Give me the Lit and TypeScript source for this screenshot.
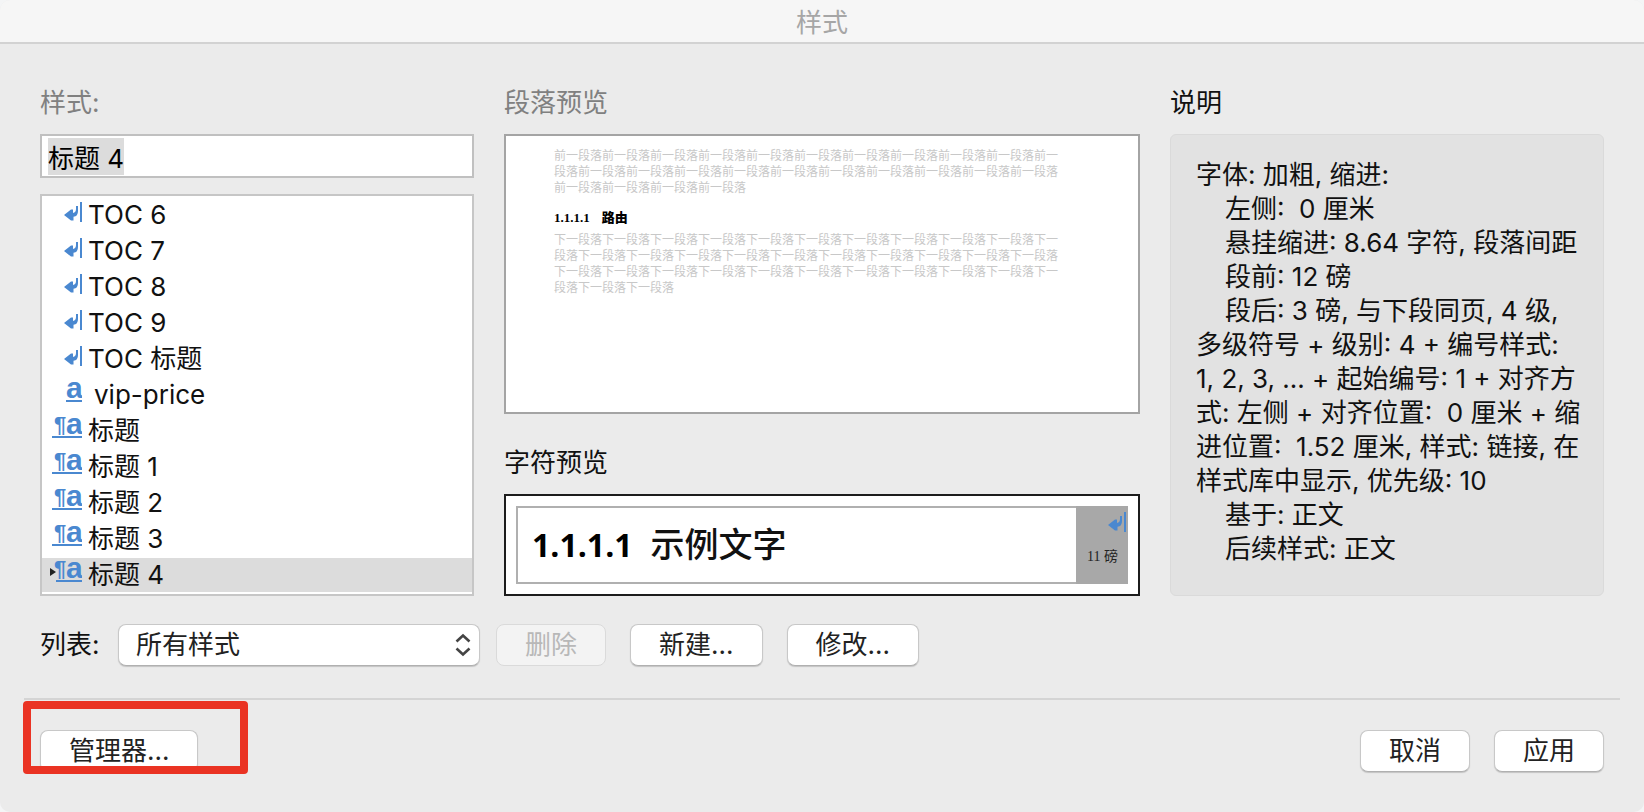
import { LitElement, html, svg, css, nothing } from "lit";
import { customElement, property, state, query } from "lit/decorators.js";
import { classMap } from "lit/directives/class-map.js";

type Kind = "paragraph" | "character" | "linked";

interface StyleEntry {
  kind: Kind;
  name: string;
}

const STYLES: StyleEntry[] = [
  { kind: "paragraph", name: "TOC 6" },
  { kind: "paragraph", name: "TOC 7" },
  { kind: "paragraph", name: "TOC 8" },
  { kind: "paragraph", name: "TOC 9" },
  { kind: "paragraph", name: "TOC 标题" },
  { kind: "character", name: "vip-price" },
  { kind: "linked", name: "标题" },
  { kind: "linked", name: "标题 1" },
  { kind: "linked", name: "标题 2" },
  { kind: "linked", name: "标题 3" },
  { kind: "linked", name: "标题 4" },
];

const DESCRIPTION: { text: string; indent?: boolean }[] = [
  { text: "字体: 加粗, 缩进:" },
  { text: "左侧:  0 厘米", indent: true },
  { text: "悬挂缩进: 8.64 字符, 段落间距", indent: true },
  { text: "段前: 12 磅", indent: true },
  { text: "段后: 3 磅, 与下段同页, 4 级,", indent: true },
  { text: "多级符号 + 级别: 4 + 编号样式:" },
  { text: "1, 2, 3, ... + 起始编号: 1 + 对齐方" },
  { text: "式: 左侧 + 对齐位置:  0 厘米 + 缩" },
  { text: "进位置:  1.52 厘米, 样式: 链接, 在" },
  { text: "样式库中显示, 优先级: 10" },
  { text: "基于: 正文", indent: true },
  { text: "后续样式: 正文", indent: true },
];

@customElement("style-icon")
export class StyleIcon extends LitElement {
  @property() kind: Kind = "paragraph";
  @property({ type: Boolean }) current = false;

  static styles = css`
    :host {
      display: block;
      line-height: 0;
    }
    .icon {
      display: block;
      margin: -14px 0 -4px;
      color: #4a88d0;
      fill: currentColor;
    }
    .letter {
      font: bold 30px "Liberation Sans", sans-serif;
    }
    .pilcrow {
      font: bold 22px "Liberation Sans", sans-serif;
    }
    .marker {
      fill: #222;
    }
  `;

  render() {
    const returnMark = svg`
      <rect x="28" y="0" width="2" height="20" />
      <path d="M12 13 L19 7.500 H21 V11 Q24 10.500 24 7 V4 H26 V9 Q26 14.400 21.500 14.800 V18.600 H19 Z" />
    `;
    const letter = svg`<text class="letter" x="14" y="16">a</text>`;
    const left = this.kind === "character" ? 14 : this.current ? 4 : 0;
    return html`
      <svg class="icon" width="32" height="38" viewBox="-2 -14 32 38" aria-hidden="true">
        ${this.kind === "paragraph"
          ? returnMark
          : svg`
            ${this.kind === "linked" ? svg`<text class="pilcrow" x="2" y="14">¶</text>` : nothing}
            ${letter}
            <rect x=${left} y="18" width=${30 - left} height="2" />
            ${this.current ? svg`<path class="marker" d="M-2 6 L4 10 L-2 14 Z" />` : nothing}
          `}
      </svg>
    `;
  }
}

@customElement("app-root")
export class AppRoot extends LitElement {
  @state() private selected = "标题 4";
  @query(".name") private nameInput!: HTMLInputElement;

  static styles = css`
    :host {
      display: block;
      background: #f4f5f6;
      color: #111;
      font-family: Inter, "Noto Sans CJK SC", sans-serif;
      font-size: 26px;
      line-height: 36px;
    }
    .window {
      box-sizing: border-box;
      min-height: 100vh;
      display: flex;
      flex-direction: column;
      background: #ebebeb;
      border-radius: 10px;
      overflow: hidden;
    }
    .titlebar {
      height: 42px;
      border-bottom: 2px solid #d2d2d2;
      background: #f6f6f6;
      color: #a6a6a6;
      text-align: center;
      line-height: 46px;
      font-size: 26px;
      font-weight: 400;
      margin: 0;
    }
    .panes {
      display: grid;
      grid-template-columns: 434fr 636fr 434fr;
      column-gap: 30px;
      padding: 41px 40px 0;
    }
    .pane {
      display: flex;
      flex-direction: column;
      min-width: 0;
    }
    .caption {
      margin: 0 0 13px;
      font-size: 26px;
      font-weight: 400;
    }
    .muted {
      color: #808080;
    }
    .name {
      box-sizing: border-box;
      width: 100%;
      height: 44px;
      margin-bottom: 16px;
      padding: 0 6px;
      border: 2px solid #c0c0c0;
      border-radius: 0;
      outline: none;
      background: #fff;
      color: #000;
      font: inherit;
      line-height: 34px;
    }
    .name::selection {
      background: #dcdcdc;
      color: #000;
    }
    .list {
      list-style: none;
      margin: 0;
      padding: 2px 0 0;
      border: 2px solid #c6c6c6;
      background: #fff;
    }
    .entry {
      display: flex;
      align-items: flex-start;
      gap: 6px;
      height: 30px;
      margin-bottom: 2px;
      padding: 4px 0 0 8px;
    }
    .entry-name {
      line-height: 26px;
      white-space: pre;
    }
    .chosen {
      background: #dcdcdc;
    }
    .character .entry-name {
      padding-left: 6px;
    }
    .page {
      box-sizing: border-box;
      height: 280px;
      margin-bottom: 31px;
      padding: 12px 48px;
      border: 2px solid #a4a4a4;
      background: #fff;
      font-size: 12px;
      line-height: 16px;
    }
    .filler {
      margin: 0;
      max-width: 508px;
      color: #c8c8c8;
    }
    .sample-heading {
      display: flex;
      gap: 12px;
      margin: 14px 0 6px;
      color: #000;
      font: bold 13px/16px "Liberation Serif", "Noto Sans CJK SC", serif;
    }
    .heavy {
      font-weight: 900;
    }
    .sample {
      flex: 1;
      display: flex;
      padding: 10px;
      border: 2px solid #1c1c1c;
      background: #fff;
    }
    .sample-text {
      flex: 1;
      display: flex;
      align-items: center;
      gap: 18px;
      padding-left: 14px;
      border: 2px solid #b0b0b0;
      border-right: 0;
      white-space: nowrap;
      height: 74px;
    }
    .number {
      font: bold 32px/40px "Open Sans", sans-serif;
      color: #000;
    }
    .words {
      font-size: 34px;
      font-weight: 500;
      line-height: 40px;
    }
    .side {
      box-sizing: border-box;
      width: 52px;
      display: flex;
      flex-direction: column;
      align-items: flex-end;
      gap: 16px;
      padding: 6px 2px 0 0;
      background: #a8a8a8;
    }
    .points {
      padding-right: 8px;
      color: #222;
      font: 14px/18px "Liberation Serif", "Noto Sans CJK SC", serif;
    }
    .description {
      flex: 1;
      padding: 23px 0 0 25px;
      border: 1px solid #dadada;
      border-radius: 6px;
      background: #e2e2e2;
      line-height: 34px;
      white-space: pre;
    }
    .indent {
      padding-left: 29px;
    }
    .controls {
      display: flex;
      align-items: center;
      padding: 28px 40px 32px;
    }
    .list-label {
      width: 78px;
    }
    .picker {
      position: relative;
      width: 362px;
      margin-right: 16px;
    }
    .select,
    .button {
      box-sizing: border-box;
      height: 42px;
      border: 1px solid #c8c8c8;
      border-bottom-color: #b0b0b0;
      border-radius: 8px;
      background: #fff;
      box-shadow: 0 1px 1px #c4c4c4;
      color: #222;
      font: inherit;
      line-height: 36px;
    }
    .select {
      display: block;
      width: 100%;
      padding: 0 40px 0 17px;
      appearance: none;
    }
    .chevrons {
      position: absolute;
      right: 8px;
      top: 9px;
      fill: none;
      stroke: #444;
      stroke-width: 2.600;
      pointer-events: none;
    }
    .button {
      padding: 0 28px;
      white-space: nowrap;
    }
    .button:disabled {
      background: #f3f3f3;
      border-color: #dadada;
      box-shadow: none;
      color: #b8b8b8;
    }
    .group {
      display: flex;
      gap: 24px;
    }
    .footer {
      display: flex;
      justify-content: space-between;
      margin: 0 24px;
      padding: 30px 16px 40px;
      border-top: 2px solid #d4d4d4;
    }
    .highlighted {
      position: relative;
    }
    .frame {
      position: absolute;
      box-sizing: border-box;
      left: -17px;
      top: -29px;
      width: 225px;
      height: 73px;
      border: 8px solid #ea3323;
      border-radius: 4px;
      pointer-events: none;
    }
  `;

  firstUpdated() {
    this.nameInput.focus();
    this.nameInput.select();
  }

  render() {
    return html`
      <main class="window">
        <h1 class="titlebar">样式</h1>
        <div class="panes">
          <section class="pane">
            <label class="caption muted" for="name">样式:</label>
            <input class="name" id="name" type="text" spellcheck="false" .value=${this.selected} />
            <ul class="list" role="listbox" aria-label="样式">
              ${STYLES.map((entry) => {
                const chosen = entry.name === this.selected;
                return html`<li
                  class=${classMap({ entry: true, chosen, character: entry.kind === "character" })}
                  role="option"
                  aria-selected=${chosen ? "true" : "false"}
                  @click=${() => (this.selected = entry.name)}
                >
                  <style-icon kind=${entry.kind} ?current=${chosen}></style-icon>
                  <span class="entry-name">${entry.name}</span>
                </li>`;
              })}
            </ul>
          </section>

          <section class="pane">
            <h2 class="caption muted">段落预览</h2>
            <div class="page">
              <p class="filler">${"前一段落".repeat(25)}</p>
              <p class="sample-heading"><span>1.1.1.1</span><span class="heavy">路由</span></p>
              <p class="filler">${"下一段落".repeat(34)}</p>
            </div>
            <h2 class="caption">字符预览</h2>
            <div class="sample">
              <div class="sample-text">
                <span class="number">1.1.1.1</span>
                <span class="words">示例文字</span>
              </div>
              <div class="side">
                <style-icon kind="paragraph"></style-icon>
                <span class="points">11 磅</span>
              </div>
            </div>
          </section>

          <section class="pane">
            <h2 class="caption">说明</h2>
            <div class="description">${DESCRIPTION.map(
              (line) => html`<div class=${classMap({ indent: !!line.indent })}>${line.text}</div>`
            )}</div>
          </section>
        </div>

        <div class="controls">
          <label class="list-label" for="filter">列表:</label>
          <div class="picker">
            <select class="select" id="filter">
              <option>所有样式</option>
            </select>
            <svg class="chevrons" width="18" height="24" viewBox="0 0 18 24" aria-hidden="true">
              <path d="M2.500 8.500 L9 2.500 L15.500 8.500 M2.500 15.500 L9 21.500 L15.500 15.500" />
            </svg>
          </div>
          <div class="group">
            <button class="button" type="button" disabled>删除</button>
            <button class="button" type="button">新建...</button>
            <button class="button" type="button">修改...</button>
          </div>
        </div>

        <footer class="footer">
          <div class="highlighted">
            <button class="button" type="button">管理器...</button>
            <div class="frame"></div>
          </div>
          <div class="group">
            <button class="button" type="button">取消</button>
            <button class="button" type="button">应用</button>
          </div>
        </footer>
      </main>
    `;
  }
}
